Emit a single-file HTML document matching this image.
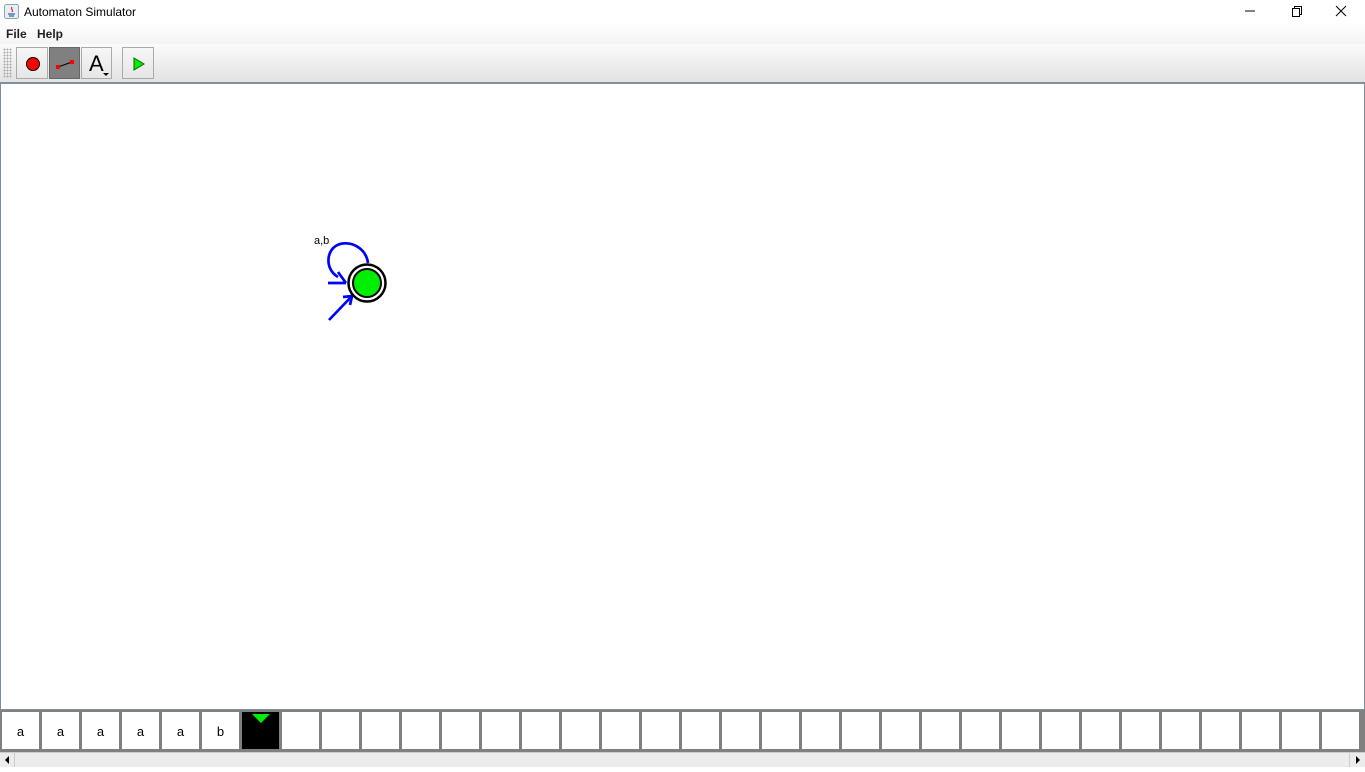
<!DOCTYPE html>
<html><head><style>
*{margin:0;padding:0;box-sizing:border-box}
body{width:1365px;height:767px;overflow:hidden;background:#fff;font-family:"Liberation Sans",sans-serif;position:relative}
.abs{position:absolute}
#title{left:0;top:0;width:1365px;height:23px;background:#fff;font-size:12px}
#menu{left:0;top:23px;width:1365px;height:21px;background:linear-gradient(#fefefe,#f4f4f4);font-size:12px;font-weight:bold;color:#222}
#tool{left:0;top:44px;width:1365px;height:38px;background:linear-gradient(#fbfbfb,#e2e2e2)}
.btn{position:absolute;top:3px;height:32px;border:1px solid #aaa;background:linear-gradient(#f6f6f6,#e6e6e6)}
#canvas{left:0;top:82px;width:1365px;height:628px;background:#fff;border:1px solid #7f8fa0;border-top:2px solid #7f8fa0}
#tape{left:0;top:710px;width:1365px;height:42px;background:#808080;display:flex;padding:2px 0 0 2px}
.c{width:37px;height:37px;background:#fff;margin-right:3px;flex:none;font-size:13px;text-align:center;line-height:40px;color:#000}
#sb{left:0;top:752px;width:1365px;height:15px;background:#ececec;border-top:1px solid #ccc}
</style></head><body>
<div id="title" class="abs">
 <svg class="abs" style="left:4px;top:4px" width="15" height="15"><rect x="0.5" y="0.5" width="14" height="14" rx="2" fill="#e8eef5" stroke="#8aa"/><path d="M4 10h7M5 12h5" stroke="#36a" stroke-width="1.3"/><path d="M8 3c-2 2 2 3 0 5" stroke="#d33" fill="none" stroke-width="1.2"/></svg>
 <span class="abs" style="left:24px;top:5px">Automaton Simulator</span>
 <svg class="abs" style="left:1240px;top:3px" width="120" height="16"><path d="M5 8h10" stroke="#000"/><rect x="52.5" y="5.5" width="7" height="8" fill="none" stroke="#000"/><path d="M54.5 5.5v-2h7v8h-2" fill="none" stroke="#000"/><path d="M96 3l10 10M106 3l-10 10" stroke="#000"/></svg>
</div>
<div id="menu" class="abs"><span class="abs" style="left:6px;top:4px">File</span><span class="abs" style="left:37px;top:4px">Help</span></div>
<div id="tool" class="abs">
 <div class="abs" style="left:3px;top:4px;width:9px;height:30px;background-image:radial-gradient(#aaa 0.8px,transparent 0.9px);background-size:3px 3px"></div>
 <div class="btn" style="left:16px;width:32px"><svg width="30" height="30"><circle cx="16" cy="16" r="6.5" fill="#f00" stroke="#000"/></svg></div>
 <div class="btn" style="left:49px;width:31px;background:#808080;border-color:#666"><svg width="30" height="30"><path d="M8 19L22 14" stroke="#000"/><rect x="6" y="17" width="4" height="4" fill="#f00"/><rect x="20" y="12" width="4" height="4" fill="#f00"/></svg></div>
 <div class="btn" style="left:81px;width:31px"><span class="abs" style="left:7px;top:3px;font-size:22px">A</span><svg class="abs" style="left:20px;top:24px" width="8" height="5"><path d="M1 1h6L4 4z" fill="#000"/></svg></div>
 <div class="btn" style="left:122px;width:32px"><svg width="30" height="30"><path d="M11 10L21 16L11 22z" fill="#0e0" stroke="#060"/></svg></div>
</div>
<div id="canvas" class="abs"></div>
<svg class="abs" style="left:300px;top:225px" width="100" height="100">
 <text x="14" y="19" font-size="11" font-family="Liberation Sans">a,b</text>
 <path d="M68 38C66 24 53 16 40 19C26 23 24 44 38 52" stroke="#00f" stroke-width="2.7" fill="none"/>
 <path d="M28 58H46M38 47L46 58" stroke="#00f" stroke-width="2.7" fill="none"/>
 <path d="M29 95L52 71M43 72L52 71L50 80" stroke="#00f" stroke-width="2.7" fill="none"/>
 <circle cx="67" cy="58" r="18.5" fill="#fff" stroke="#000" stroke-width="2.5"/>
 <circle cx="67" cy="58" r="14" fill="#0e0" stroke="#000" stroke-width="2"/>
</svg>
<div id="tape" class="abs">
<div class="c">a</div><div class="c">a</div><div class="c">a</div><div class="c">a</div><div class="c">a</div><div class="c">b</div>
<div class="c" style="background:#000;position:relative"><svg class="abs" style="left:10px;top:2px" width="18" height="10"><path d="M0 0h18L9 9z" fill="#0e0"/></svg></div>
<div class="c"></div><div class="c"></div><div class="c"></div><div class="c"></div><div class="c"></div><div class="c"></div><div class="c"></div><div class="c"></div><div class="c"></div><div class="c"></div><div class="c"></div><div class="c"></div><div class="c"></div><div class="c"></div><div class="c"></div><div class="c"></div><div class="c"></div><div class="c"></div><div class="c"></div><div class="c"></div><div class="c"></div><div class="c"></div><div class="c"></div><div class="c"></div><div class="c"></div><div class="c"></div><div class="c"></div>
</div>
<div id="sb" class="abs">
 <div class="abs" style="left:0;top:0;width:15px;height:14px;border-right:1px solid #ccc"><svg width="15" height="14"><path d="M9 3v8L5 7z" fill="#000"/></svg></div>
 <div class="abs" style="left:1349px;top:0;width:16px;height:14px;border-left:1px solid #ccc"><svg width="15" height="14"><path d="M6 3v8L10 7z" fill="#000"/></svg></div>
</div>
</body></html>
